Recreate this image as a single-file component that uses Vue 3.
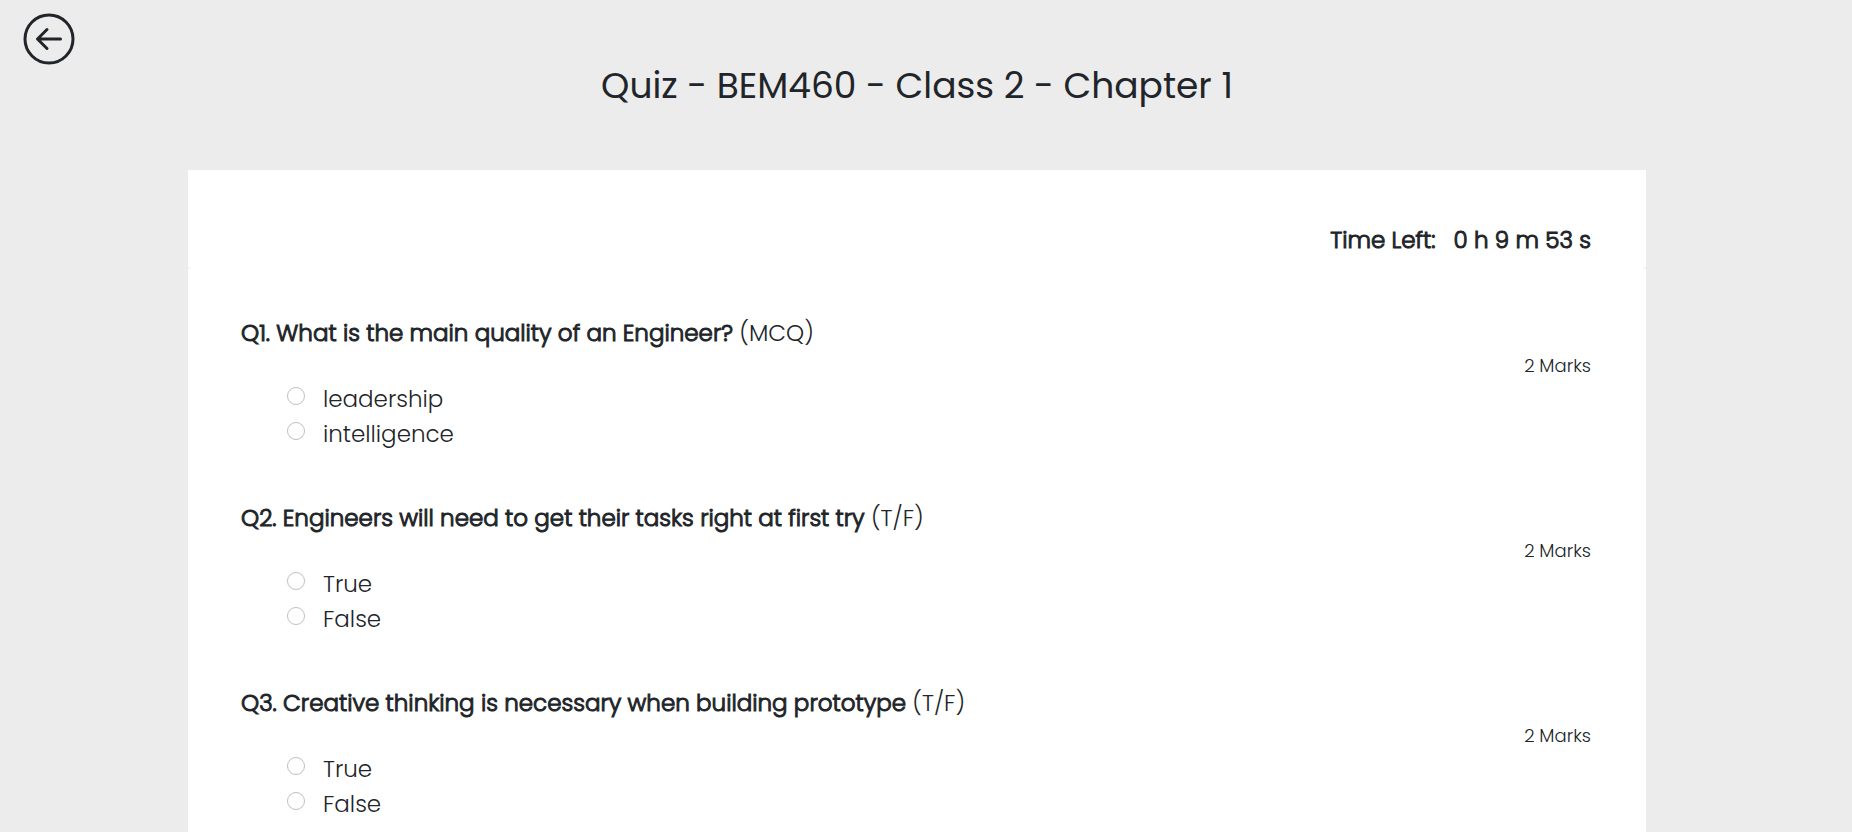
<script setup>
import { ref } from 'vue'

const questions = ref([
  { text: 'What is the main quality of an Engineer?', kind: 'MCQ', marks: 2, options: ['leadership', 'intelligence'], answer: null },
  { text: 'Engineers will need to get their tasks right at first try', kind: 'T/F', marks: 2, options: ['True', 'False'], answer: null },
  { text: 'Creative thinking is necessary when building prototype', kind: 'T/F', marks: 2, options: ['True', 'False'], answer: null },
])
</script>

<template>
  <div class="page">
    <button class="back" type="button" aria-label="Back">
      <svg viewBox="0 0 52 52" fill="none" stroke="currentColor" stroke-width="3" stroke-linecap="round" stroke-linejoin="round">
        <circle cx="26" cy="26" r="24" />
        <path d="M37.500 26H14.500M24 16.500L14.500 26L24 35.500" />
      </svg>
    </button>
    <h1 class="title">Quiz - BEM460 - Class 2 - Chapter 1</h1>
    <main class="sheet">
      <div class="timer">
        <span>Time Left:</span>
        <span>0 h 9 m 53 s</span>
      </div>
      <form class="questions">
        <fieldset v-for="(q, i) in questions" :key="i" class="question">
          <legend class="prompt"><b>Q{{ i + 1 }}. {{ q.text }}</b> ({{ q.kind }})</legend>
          <p class="marks">{{ q.marks }} Marks</p>
          <div class="options">
            <label v-for="o in q.options" :key="o" class="option">
              <input v-model="q.answer" type="radio" :name="'q' + i" :value="o" />
              <span>{{ o }}</span>
            </label>
          </div>
        </fieldset>
      </form>
    </main>
  </div>
</template>

<style>
body {
  margin: 0;
  background: #ececec;
}
</style>

<style scoped>
.page {
  box-sizing: border-box;
  height: 100vh;
  overflow: hidden;
  position: relative;
  padding: 58px 206px 0 188px;
  font-family: Poppins, Inter, "Open Sans", sans-serif;
  font-size: 23px;
  font-weight: 300;
  line-height: 35px;
  color: #212529;
  background: #ececec;
}
.back {
  position: absolute;
  top: 13px;
  left: 23px;
  width: 52px;
  height: 52px;
  padding: 0;
  border: 0;
  background: none;
  color: inherit;
  cursor: pointer;
}
.back svg {
  display: block;
}
.title {
  margin: 0 0 56px;
  font-size: 36px;
  font-weight: 400;
  line-height: 56px;
  text-align: center;
}
.timer {
  display: flex;
  justify-content: flex-end;
  gap: 18px;
  padding: 53px 55px 9px;
  -webkit-text-stroke: 1px currentColor;
  background: #fff;
}
.questions {
  padding: 49px 55px 48px 53px;
  border-radius: 4px;
  background: #fff;
}
.question {
  min-width: 0;
  margin: 0 0 48px;
  padding: 0;
  border: 0;
}
.prompt {
  padding: 0;
}
.prompt b {
  font-weight: 300;
  -webkit-text-stroke: 1px currentColor;
}
.marks {
  margin: 0;
  padding: 3px 0 4px;
  font-size: 18px;
  line-height: 24px;
  text-align: right;
}
.options {
  display: flex;
  flex-direction: column;
  align-items: flex-start;
  padding: 0 0 1px 46px;
}
.option {
  display: flex;
  align-items: flex-start;
  gap: 18px;
}
.option input {
  appearance: none;
  flex: none;
  width: 18px;
  height: 18px;
  margin: 5px 0 0;
  border: 1px solid #bfbfbf;
  border-radius: 50%;
  background: #fff;
}
.option input:checked {
  border: 5px solid #0d6efd;
}
</style>
